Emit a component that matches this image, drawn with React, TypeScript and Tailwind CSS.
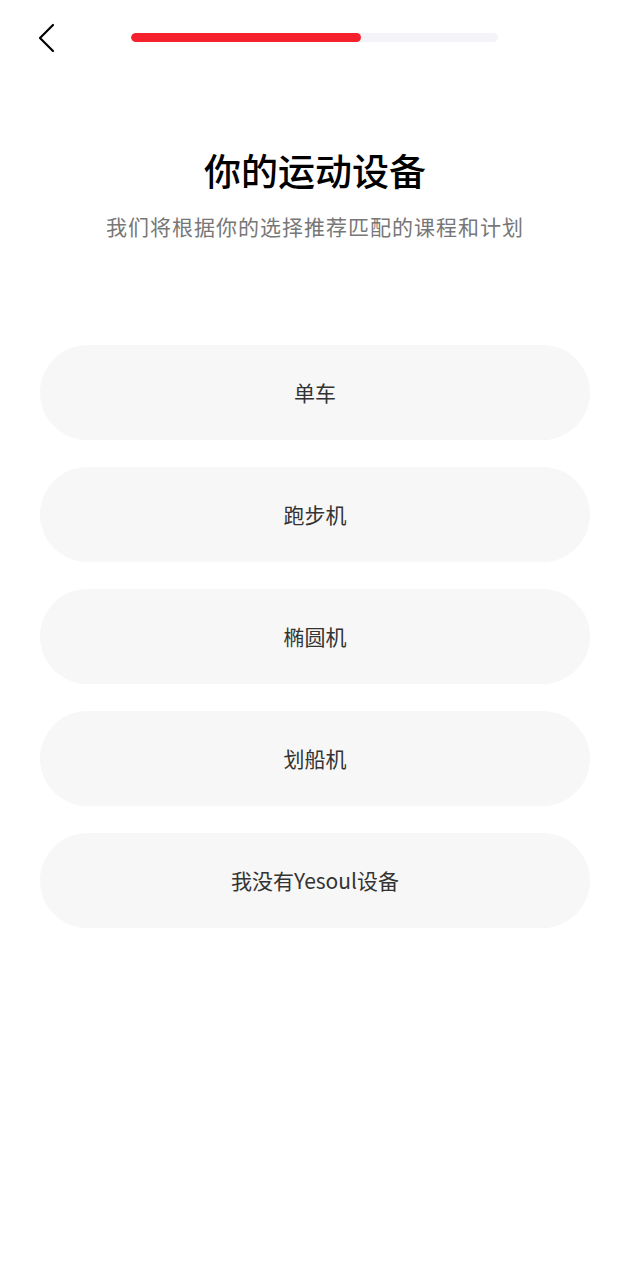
const options = ['单车', '跑步机', '椭圆机', '划船机', '我没有Yesoul设备'];

export default function App() {
  return (
    <div
      className="w-[630px] h-[1280px] bg-white flex flex-col"
      style={{ fontFamily: '"Noto Sans CJK SC", "Noto Sans", sans-serif' }}
    >
      {/* header */}
      <div className="h-[74px] flex items-center pl-[36px] pt-[1px]">
        <svg width="20" height="30" viewBox="0 0 20 30" fill="none">
          <path d="M17 2 L4 15 L17 28" stroke="#000" strokeWidth="2.2" strokeLinecap="round" strokeLinejoin="round" />
        </svg>
        <div className="ml-[75px] w-[367px] h-[9px] rounded-full bg-[#f4f4f8] overflow-hidden">
          <div className="h-full w-[230px] rounded-full bg-[#f5222d]" />
        </div>
      </div>

      <h1 className="mt-[70px] text-center text-[37px] leading-[52px] font-medium text-black">
        你的运动设备
      </h1>
      <p className="mt-[16px] text-center text-[21px] leading-[28px] tracking-[1px] text-[#777]">
        我们将根据你的选择推荐匹配的课程和计划
      </p>

      <div className="mt-[105px] px-[40px] flex flex-col gap-[27px]">
        {options.map((o) => (
          <button
            key={o}
            className="h-[95px] w-full rounded-full bg-[#f7f7f7] text-[21px] text-[#333]"
          >
            {o}
          </button>
        ))}
      </div>
    </div>
  );
}
